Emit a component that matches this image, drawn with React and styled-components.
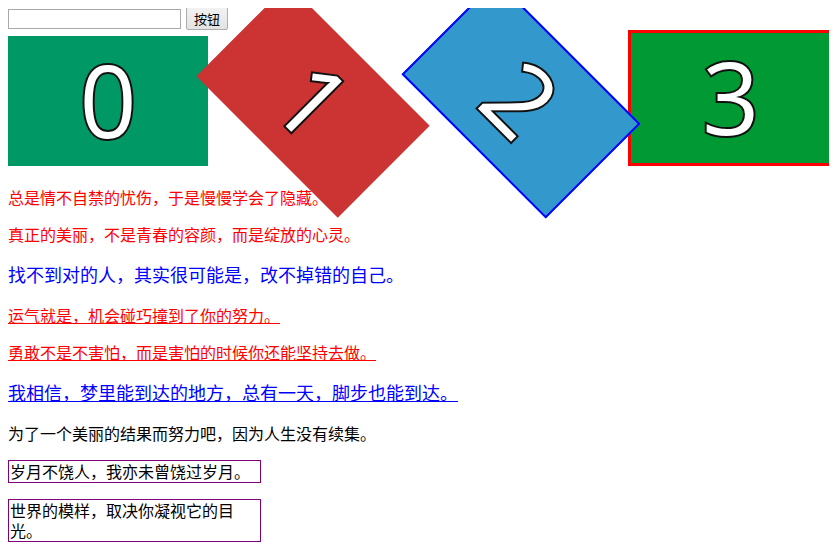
import React from "react";
import styled, { createGlobalStyle } from "styled-components";

const GlobalStyle = createGlobalStyle`
    body {
        margin: 8px;
        font-family: "Noto Sans CJK SC", "Microsoft YaHei", sans-serif;
        color: #000;
        background: #fff;
    }
`;

const Toolbar = styled.div`
    display: flex;
    align-items: center;
    gap: 5px;
    height: 23px;
    margin-top: -1px;
`;

const TextInput = styled.input`
    box-sizing: border-box;
    width: 173px;
    height: 20px;
    padding: 1px 2px;
    border: 1px solid #a9a9a9;
    outline: none;
`;

const Button = styled.button`
    box-sizing: border-box;
    width: 42px;
    height: 23px;
    padding: 0;
    border: 1px solid #adadad;
    border-radius: 2px;
    background: linear-gradient(#f2f2f2, #e3e3e3);
    font-family: "Noto Sans CJK SC", sans-serif;
    font-size: 13px;
    color: #000;
`;

const TileRow = styled.div`
    display: flex;
    align-items: flex-end;
    gap: 5.3px;
    width: 826px;
    padding-bottom: 5px;
`;

const Tile = styled.div`
    flex: none;
    width: 200px;
    height: 130px;
    line-height: 126px;
    text-align: center;
    font-family: "Open Sans", "Segoe UI", sans-serif;
    font-size: 100px;
    color: #fff;
    -webkit-text-stroke: 4px #111;
    paint-order: stroke fill;
    background: ${p => p.$bg};
    border: ${p => p.$border || "none"};
    transform: ${p => (p.$turn ? `rotate(${p.$turn}deg)` : "none")};
`;

const Line = styled.p`
    margin: 1em 0;
    font-size: ${p => p.$size || 16}px;
    line-height: 1.32;
    color: ${p => p.$color || "#000"};
    text-decoration: ${p => (p.$underline ? "underline" : "none")};
    text-underline-offset: 1px;
`;

const Framed = styled.div`
    width: 250px;
    margin: 16px 0;
    border: 1px solid #800080;
    font-size: 16px;
    line-height: 20.5px;
    padding-left: 1px;
`;

const tiles = [
    { n: 0, bg: "#009966" },
    { n: 1, bg: "#cc3333", turn: 45 },
    { n: 2, bg: "#3399cc", border: "2px solid #0000ff", turn: 45 },
    { n: 3, bg: "#009933", border: "3px solid #ff0000" },
];

export default function App() {
    return (
        <>
            <GlobalStyle />
            <Toolbar>
                <TextInput type="text" />
                <Button>按钮</Button>
            </Toolbar>
            <TileRow>
                {tiles.map(t => (
                    <Tile key={t.n} $bg={t.bg} $border={t.border} $turn={t.turn}>
                        {t.n}
                    </Tile>
                ))}
            </TileRow>
            <Line $color="#ff0000">总是情不自禁的忧伤，于是慢慢学会了隐藏。</Line>
            <Line $color="#ff0000">真正的美丽，不是青春的容颜，而是绽放的心灵。</Line>
            <Line $color="#0000ff" $size={18}>找不到对的人，其实很可能是，改不掉错的自己。</Line>
            <Line $color="#ff0000" $underline>运气就是，机会碰巧撞到了你的努力。</Line>
            <Line $color="#ff0000" $underline>勇敢不是不害怕，而是害怕的时候你还能坚持去做。</Line>
            <Line $color="#0000ff" $size={18} $underline>我相信，梦里能到达的地方，总有一天，脚步也能到达。</Line>
            <Line>为了一个美丽的结果而努力吧，因为人生没有续集。</Line>
            <Framed>岁月不饶人，我亦未曾饶过岁月。</Framed>
            <Framed>世界的模样，取决你凝视它的目光。</Framed>
        </>
    );
}
